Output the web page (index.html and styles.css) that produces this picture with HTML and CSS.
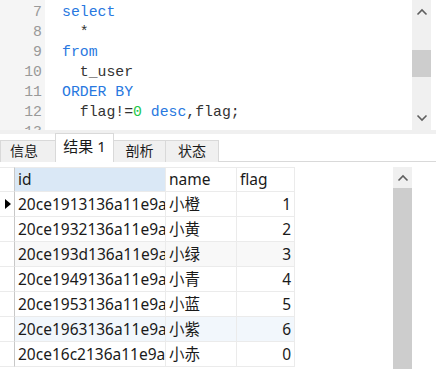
FILE: index.html
```html
<!DOCTYPE html>
<html lang="zh-CN">
<head>
    <meta charset="UTF-8">
    <title>查询结果</title>
    <link rel="stylesheet" href="styles.css">
</head>
<body>
    <div class="editor">
        <div class="gutter">
            <div>7</div><div>8</div><div>9</div><div>10</div><div>11</div><div>12</div><div>13</div>
        </div>
        <div class="code">
            <div class="line"><span class="kw">select</span></div>
            <div class="line">  *</div>
            <div class="line"><span class="kw">from</span></div>
            <div class="line">  t_user</div>
            <div class="line"><span class="kw">ORDER BY</span></div>
            <div class="line">  flag!=<span class="num">0</span> <span class="kw">desc</span>,flag;</div>
            <div class="line"> </div>
        </div>
        <div class="vscroll">
            <div class="arrow">
                <svg width="12" height="8" viewBox="0 0 12 8"><polyline points="1.5,6.5 6,2 10.5,6.5" fill="none" stroke="#5f5f5f" stroke-width="1.6"/></svg>
            </div>
            <div class="track">
                <div class="thumb"></div>
            </div>
            <div class="arrow">
                <svg width="12" height="8" viewBox="0 0 12 8"><polyline points="1.5,1.5 6,6 10.5,1.5" fill="none" stroke="#5f5f5f" stroke-width="1.6"/></svg>
            </div>
        </div>
        <div class="edge"></div>
    </div>

    <div class="splitter"></div>

    <div class="tabbar">
        <div class="tab">信息</div>
        <div class="tab active">结果 1</div>
        <div class="tab">剖析</div>
        <div class="tab">状态</div>
    </div>

    <div class="result">
        <div class="grid">
            <div class="cell ind head"></div>
            <div class="cell head sel">id</div>
            <div class="cell head">name</div>
            <div class="cell head">flag</div>

            <div class="cell ind"><span class="caret"></span></div>
            <div class="cell">20ce1913136a11e9a</div>
            <div class="cell">小橙</div>
            <div class="cell r">1</div>

            <div class="cell ind"></div>
            <div class="cell">20ce1932136a11e9a</div>
            <div class="cell">小黄</div>
            <div class="cell r">2</div>

            <div class="cell ind"></div>
            <div class="cell gray">20ce193d136a11e9a</div>
            <div class="cell gray">小绿</div>
            <div class="cell gray r">3</div>

            <div class="cell ind"></div>
            <div class="cell">20ce1949136a11e9a</div>
            <div class="cell">小青</div>
            <div class="cell r">4</div>

            <div class="cell ind"></div>
            <div class="cell">20ce1953136a11e9a</div>
            <div class="cell">小蓝</div>
            <div class="cell r">5</div>

            <div class="cell ind"></div>
            <div class="cell blue">20ce1963136a11e9a</div>
            <div class="cell blue">小紫</div>
            <div class="cell blue r">6</div>

            <div class="cell ind"></div>
            <div class="cell">20ce16c2136a11e9a</div>
            <div class="cell">小赤</div>
            <div class="cell r">0</div>
        </div>
        <div class="gscroll">
            <div class="arrow">
                <svg width="12" height="8" viewBox="0 0 12 8"><polyline points="1.5,6.5 6,2 10.5,6.5" fill="none" stroke="#5f5f5f" stroke-width="1.6"/></svg>
            </div>
            <div class="gthumb"></div>
        </div>
    </div>
</body>
</html>
```

FILE: styles.css
```css
* {
    margin: 0;
    padding: 0;
    box-sizing: border-box;
}

body {
    width: 436px;
    height: 370px;
    overflow: hidden;
    background: #fff;
    font-family: "Noto Sans", "Noto Sans CJK SC", sans-serif;
    color: #1a1a1a;
}

/* 编辑器 */
.editor {
    display: flex;
    height: 130px;
    overflow: hidden;
}

.gutter {
    width: 45px;
    background: #f5f5f5;
    padding: 2px 3px 0 0;
    text-align: right;
    color: #999;
    font-family: "Liberation Mono", monospace;
    font-size: 14.8px;
    line-height: 20px;
}

.code {
    flex: 1;
    padding: 2px 0 0 17px;
    font-family: "Liberation Mono", monospace;
    font-size: 14.8px;
    line-height: 20px;
    color: #333;
    overflow: hidden;
}

.line {
    white-space: pre;
    height: 20px;
}

.kw {
    color: #2878e0;
}

.num {
    color: #1ec84a;
}

.vscroll {
    width: 19px;
    background: #f0f0f0;
    display: flex;
    flex-direction: column;
}

.vscroll .arrow {
    height: 24px;
    display: flex;
    align-items: center;
    justify-content: center;
}

.vscroll .track {
    flex: 1;
    padding-top: 26px;
}

.thumb {
    height: 27px;
    background: #cdcdcd;
}

.edge {
    width: 5px;
    background: #fff;
}

.splitter {
    height: 4px;
    background: #f0f0f0;
}

/* 选项卡 */
.tabbar {
    display: flex;
    align-items: flex-end;
    height: 28px;
    border-bottom: 1px solid #d9d9d9;
}

.tab {
    height: 22px;
    background: #f0f0f0;
    border: 1px solid #d9d9d9;
    border-bottom: none;
    margin-left: -1px;
    margin-bottom: -1px;
    font-size: 14px;
    line-height: 20px;
    text-align: center;
    color: #1a1a1a;
}

.tab:nth-child(1) { width: 56px; padding-right: 8px; margin-left: 0; }
.tab:nth-child(2) { width: 59px; }
.tab:nth-child(3) { width: 53px; }
.tab:nth-child(4) { width: 54px; }

.tab.active {
    height: 29px;
    background: #fff;
    line-height: 24px;
    font-size: 15px;
    position: relative;
    z-index: 1;
}

/* 结果表格 */
.result {
    display: flex;
    height: 207px;
    padding-top: 5px;
}

.grid {
    display: grid;
    grid-template-columns: 15px 151px 71px 58px;
    grid-auto-rows: 25px;
    align-content: start;
    width: 393px;
}

.cell {
    border-right: 1px solid #ebebeb;
    border-bottom: 1px solid #ebebeb;
    font-size: 15.5px;
    line-height: 24px;
    padding: 0 3px;
    white-space: nowrap;
    overflow: hidden;
}

.cell.head {
    border-top: 1px solid #ebebeb;
    line-height: 23px;
}

.cell.sel {
    background: #dae8f6;
}

.cell.ind {
    border-right: 1px solid #c8c8c8;
    position: relative;
}

.cell.r {
    text-align: right;
}

.cell.gray {
    background: #f8f8f8;
}

.cell.blue {
    background: #f2f7fc;
}

.caret {
    position: absolute;
    left: 5px;
    top: 7px;
    border-left: 6px solid #000;
    border-top: 5px solid transparent;
    border-bottom: 5px solid transparent;
}

.gscroll {
    width: 19px;
    display: flex;
    flex-direction: column;
}

.gscroll .arrow {
    height: 21px;
    background: #f0f0f0;
    display: flex;
    align-items: center;
    justify-content: center;
}

.gthumb {
    flex: 1;
    background: #cdcdcd;
}
```
